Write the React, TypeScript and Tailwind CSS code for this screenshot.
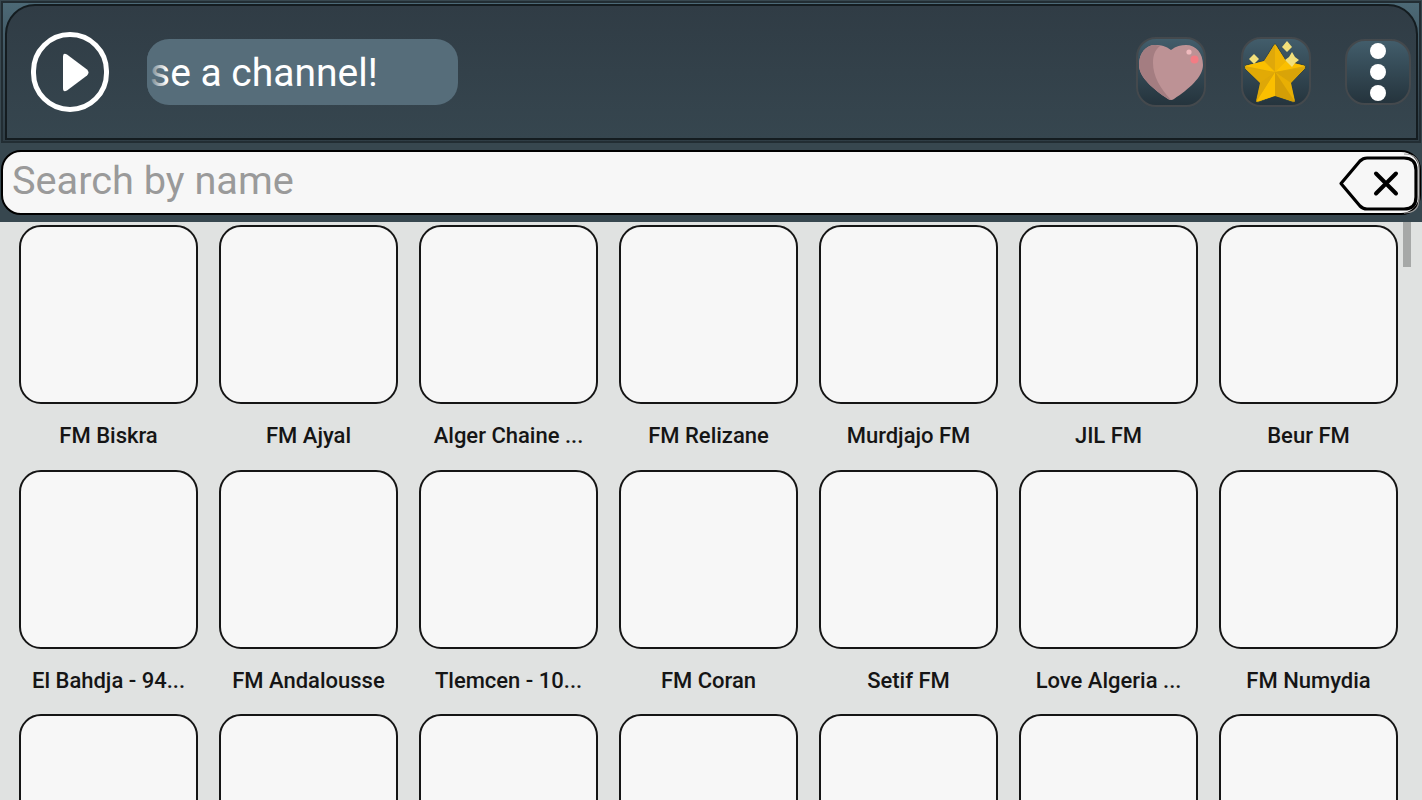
import React from "react";

const rows = [
  ["FM Biskra", "FM Ajyal", "Alger Chaine ...", "FM Relizane", "Murdjajo FM", "JIL FM", "Beur FM"],
  ["El Bahdja - 94...", "FM Andalousse", "Tlemcen - 10...", "FM Coran", "Setif FM", "Love Algeria ...", "FM Numydia"],
  ["", "", "", "", "", "", ""],
];

function Heart() {
  return (
    <svg width="70" height="70" viewBox="1136 37 70 70">
      <path d="M1171 50 C1176 46 1181 45 1186 45 C1196 45 1203 53 1203 65 C1203 77 1189 89 1174 99 Q1171 101 1168 99 C1153 89 1139 77 1139 65 C1139 53 1146 45 1155 45 C1161 45 1166 46 1171 50Z" fill="#bd9295" />
      <path d="M1160 46 C1157 45 1156 45 1155 45 C1146 45 1139 53 1139 65 C1139 77 1153 89 1168 99 Q1170 100 1171 100 C1160 88 1153 76 1153 63 C1153 55 1155 50 1160 46Z" fill="#a47d81" />
      <circle cx="1189" cy="52" r="2.6" fill="#efb9bd" />
      <circle cx="1194.5" cy="59.5" r="4" fill="#f27c84" />
    </svg>
  );
}

function Star() {
  const c = "1275 72";
  return (
    <svg width="70" height="70" viewBox="1241 37 70 70">
      <path d="M1275 44 Q1276 44 1277 46 L1286 61 L1304 65 Q1307 66 1305 69 L1291 83 L1295 100 Q1295 103 1292 102 L1275 96 L1259 102 Q1256 103 1256 100 L1260 83 L1245 69 Q1243 66 1246 65 L1264 61 L1273 46 Q1274 44 1275 44Z" fill="#dca90a" stroke="#1d3646" strokeWidth="0.8" />
      <path d={`M1275 44 L1286 61 L${c}Z`} fill="#f0b504" />
      <path d={`M1275 44 L1264 61 L${c}Z`} fill="#dfa80a" />
      <path d={`M1286 61 L1305 66 L${c}Z`} fill="#fbbf00" />
      <path d={`M1305 68 L1291 83 L${c}Z`} fill="#d9a408" />
      <path d={`M1291 83 L1295 102 L${c}Z`} fill="#e8af04" />
      <path d={`M1295 102 L1275 96 L${c}Z`} fill="#d49e06" />
      <path d={`M1275 96 L1256 102 L${c}Z`} fill="#fbbf00" />
      <path d={`M1256 102 L1260 83 L${c}Z`} fill="#dea708" />
      <path d={`M1260 83 L1245 68 L${c}Z`} fill="#e2aa06" />
      <path d={`M1245 66 L1264 61 L${c}Z`} fill="#fbbf00" />
      <path d="M1287 41 L1292 47 L1287 52 L1282 47Z" fill="#f3e07a" />
      <path d="M1292 52 L1295 57 L1299 60 L1295 63 L1292 67 L1288 63 L1285 60 L1289 57Z" fill="#f3e07a" />
      <path d="M1254 54 L1259 59 L1254 64 L1249 59Z" fill="#f3e07a" />
    </svg>
  );
}

function IconTile({ children, small }: { children?: React.ReactNode; small?: boolean }) {
  return (
    <div className={`${small ? "h-[66px] w-[66px]" : "h-[70px] w-[70px]"} relative flex items-center justify-center rounded-[20px] border-2 border-[#44494d] bg-gradient-to-b from-[#425d6b] to-[#25343d]`}>
      {children}
    </div>
  );
}

export default function App() {
  return (
    <div className="h-[800px] w-[1422px] overflow-hidden bg-[#e0e2e1] font-['Roboto',sans-serif]">
      <header className="h-[144px] bg-[#37474f] pt-px px-px">
        <div className="h-[142px] border-2 border-[#222d33] bg-gradient-to-b from-[#4c6976] via-[#3c505b] to-[#2f3d45] pl-[2px] pr-[1px] pt-[1px]">
          <div className="flex h-[136px] items-center rounded-t-[30px] border-2 border-[#141c20] bg-gradient-to-b from-[#303c45] to-[#36464f] pl-[24px] pr-[5px]">
            <div className="flex h-[80px] w-[78px] items-center justify-center rounded-full border-[5px] border-white">
              <svg width="27" height="39" viewBox="0 0 27 39" className="ml-[10px]">
                <path d="M5 1.5 L25 16.5 Q28 19.5 25 22.5 L5 37.5 Q1 40 1 35 L1 4 Q1 -1 5 1.5Z" fill="#fff" />
              </svg>
            </div>
            <div className="relative ml-[38px] flex h-[66px] w-[311px] items-center overflow-hidden rounded-[22px] bg-[#566d7a] pl-[3px] pt-[3px]">
              <span className="whitespace-nowrap text-[39px] leading-none text-white">se a channel!</span>
              <div className="absolute left-0 top-0 h-full w-[20px] bg-gradient-to-r from-[#566d7a] to-transparent" />
            </div>
            <div className="ml-auto flex items-center">
              <IconTile>
                <div className="absolute left-[-2px] top-[-2px]"><Heart /></div>
              </IconTile>
              <div className="ml-[35px]">
                <IconTile>
                  <div className="absolute left-[-2px] top-[-2px]"><Star /></div>
                </IconTile>
              </div>
              <div className="ml-[34px]">
                <IconTile small>
                  <div className="flex flex-col gap-[5px]">
                    <span className="block h-[16px] w-[16px] rounded-full bg-white" />
                    <span className="block h-[16px] w-[16px] rounded-full bg-white" />
                    <span className="block h-[16px] w-[16px] rounded-full bg-white" />
                  </div>
                </IconTile>
              </div>
            </div>
          </div>
        </div>
      </header>
      <div className="h-[78px] bg-[#37474f] px-px pt-[6px]">
        <div className="flex h-[65px] items-center justify-between rounded-[20px] border-2 border-black bg-[#f7f7f7] pl-[9px] pr-[1px]">
          <span className="pb-[3px] text-[39.7px] leading-none text-[#9a9a9a]">Search by name</span>
          <svg width="80" height="60" viewBox="0 0 80 60" className="overflow-visible">
            <path d="M3 30.5 L22 8 Q25 5 29 5 L66 5 Q78 5 78 17 L78 44 Q78 56 66 56 L29 56 Q25 56 22 53Z" fill="none" stroke="#000" strokeWidth="3.2" strokeLinejoin="round" />
            <path d="M66 1 Q81 1 81 15 L81 46 Q81 60 66 60" fill="none" stroke="#9a9a9a" strokeWidth="1.2" />
            <path d="M38 20.5 L58 40.5 M58 20.5 L38 40.5" stroke="#000" strokeWidth="4" strokeLinecap="round" />
          </svg>
        </div>
      </div>
      <main className="relative grid grid-cols-[repeat(7,200px)] auto-rows-[244.5px] pl-[9px] pt-[3px]">
        {rows.flat().map((name, i) => (
          <div key={i} className="ml-[10px] w-[179px]">
            <div className="h-[179px] w-[179px] rounded-[22px] border-2 border-[#151515] bg-[#f7f7f7]" />
            <div className="mt-[20px] whitespace-nowrap text-center text-[22px] font-medium leading-[24px] text-[#151515]">{name}</div>
          </div>
        ))}
        <div className="absolute right-[11px] top-0 h-[45px] w-[8px] bg-[#a6a8a7]" />
      </main>
    </div>
  );
}
